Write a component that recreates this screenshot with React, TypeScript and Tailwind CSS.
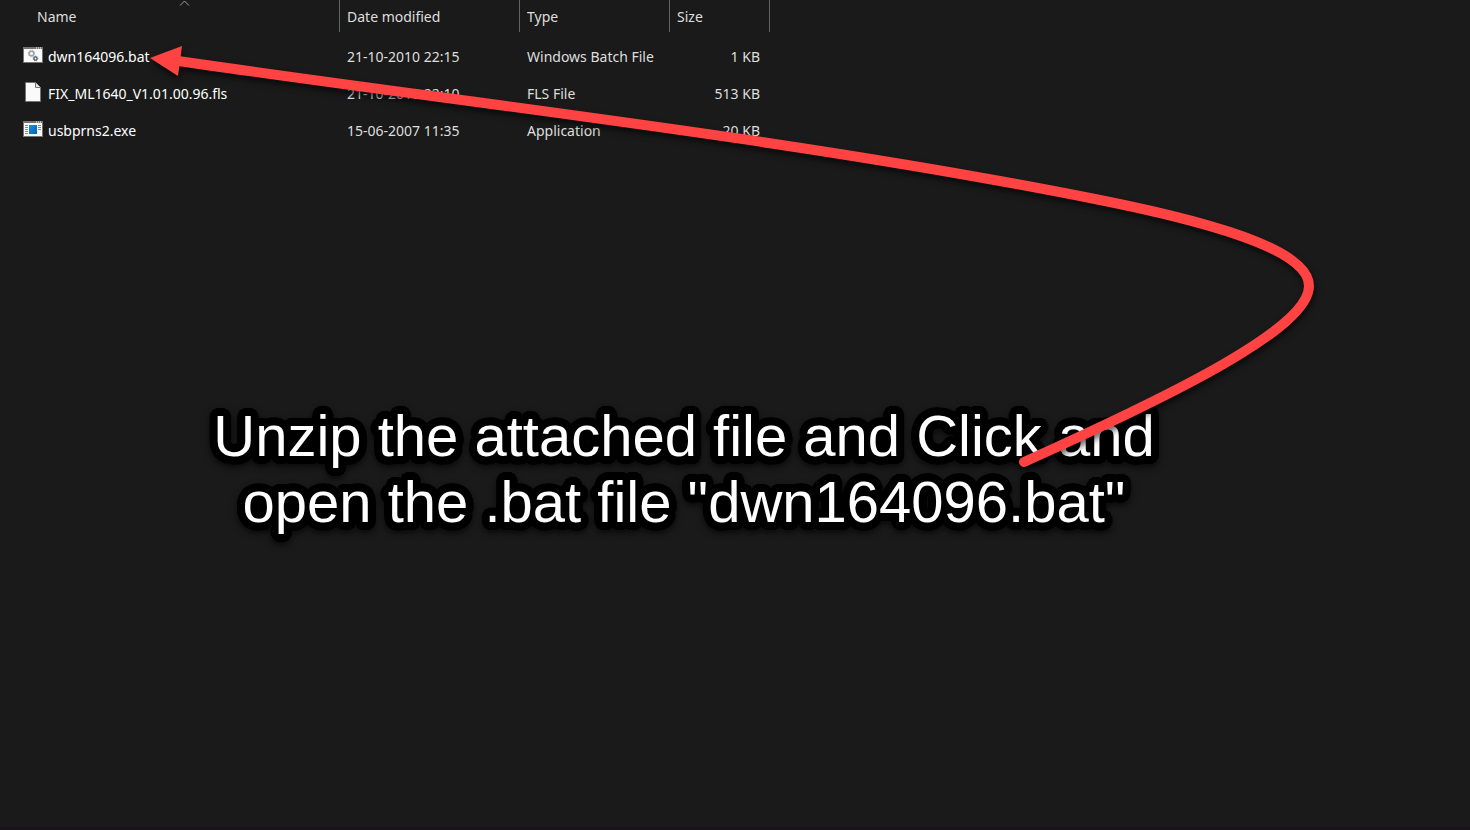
import type { ReactNode } from 'react';

interface FileEntry {
  name: string;
  modified: string;
  type: string;
  size: string;
  icon: ReactNode;
}

const batchIcon = (
  <svg className="mb-1 h-5 w-5" viewBox="0 0 20 20" fill="none">
    <rect x="0.5" y="2.5" width="19" height="15" fill="#fafafa" stroke="#77736f" />
    <path d="M0 3h20" stroke="#77736f" strokeWidth={2} />
    <path d="M13 3h1M15 3h1M17 3h1" stroke="#fff" />
    <circle cx="8.5" cy="8.5" r="2.3" stroke="#9aa5b1" strokeWidth={1.5} />
    <circle
      cx="8.5"
      cy="8.5"
      r="3.3"
      stroke="#9aa5b1"
      strokeWidth={1}
      strokeDasharray="1.3 1.3"
    />
    <circle cx="12.5" cy="13.5" r="1.6" stroke="#4b5560" strokeWidth={1.2} />
    <circle
      cx="12.5"
      cy="13.5"
      r="2.4"
      stroke="#4b5560"
      strokeWidth={0.8}
      strokeDasharray="0.9 1"
    />
  </svg>
);

const documentIcon = (
  <svg className="mb-1 h-5 w-5" viewBox="0 0 20 20" fill="none">
    <path d="M2.5 0.5h10l5 5v14h-15z" fill="#fafafa" stroke="#77736f" />
    <path d="M12.5 0.5v5h5" fill="#e4e4e4" stroke="#77736f" />
  </svg>
);

const applicationIcon = (
  <svg className="mb-1 h-5 w-5" viewBox="0 0 20 20" fill="none">
    <defs>
      <linearGradient id="app-blue" x1="0" y1="0" x2="1" y2="1">
        <stop offset="0" stopColor="#1c93dd" />
        <stop offset="1" stopColor="#0560b8" />
      </linearGradient>
    </defs>
    <rect x="0.5" y="2.5" width="19" height="15" fill="#fafafa" stroke="#77736f" />
    <path d="M0 3h20" stroke="#77736f" strokeWidth={2} />
    <path d="M13 3h1M15 3h1M17 3h1" stroke="#fff" />
    <path
      d="M2 6.5h3M2 8.5h3M2 10.5h3M2 12.5h3M2 14.5h3M15 6.5h3M15 8.5h3M15 10.5h3"
      stroke="#8a8a8a"
    />
    <rect x="6" y="6" width="8" height="9" fill="url(#app-blue)" />
  </svg>
);

const files: FileEntry[] = [
  {
    name: 'dwn164096.bat',
    modified: '21-10-2010 22:15',
    type: 'Windows Batch File',
    size: '1 KB',
    icon: batchIcon,
  },
  {
    name: 'FIX_ML1640_V1.01.00.96.fls',
    modified: '21-10-2010 22:10',
    type: 'FLS File',
    size: '513 KB',
    icon: documentIcon,
  },
  {
    name: 'usbprns2.exe',
    modified: '15-06-2007 11:35',
    type: 'Application',
    size: '20 KB',
    icon: applicationIcon,
  },
];

// Rounded black outline: copies of the text placed on circles around it
const ring = (radius: number, steps: number) =>
  Array.from({ length: steps }, (_, i) => {
    const angle = (i / steps) * Math.PI * 2;
    const x = (Math.cos(angle) * radius).toFixed(1);
    const y = (Math.sin(angle) * radius).toFixed(1);
    return `${x}px ${y}px 0 #000`;
  });

const outline = [...ring(8, 24), ...ring(4, 12)].join(', ');

function FileTable() {
  return (
    <table className="w-[770px] table-fixed border-separate border-spacing-0 text-left text-sm leading-5">
      <colgroup>
        <col className="w-[340px]" />
        <col className="w-[180px]" />
        <col className="w-[150px]" />
        <col className="w-[100px]" />
      </colgroup>
      <thead className="text-[#dedede]">
        <tr className="h-8">
          <th
            aria-sort="ascending"
            className="relative border-r border-[#636363] pt-0.5 pl-[37px] font-normal"
          >
            Name
            <svg
              className="absolute top-0 left-[179px] h-2 w-3"
              viewBox="0 0 12 8"
              fill="none"
              stroke="#a0a0a0"
            >
              <path d="M1 5.5l4.5-4.5 4.5 4.5" />
            </svg>
          </th>
          <th className="border-r border-[#636363] pt-0.5 pl-[7px] font-normal">
            Date modified
          </th>
          <th className="border-r border-[#636363] pt-0.5 pl-[7px] font-normal">
            Type
          </th>
          <th className="border-r border-[#636363] pt-0.5 pl-[7px] font-normal">
            Size
          </th>
        </tr>
      </thead>
      <tbody className="text-[#dedede]">
        <tr className="h-[6px]" aria-hidden="true">
          <td colSpan={4}></td>
        </tr>
        {files.map((file) => (
          <tr key={file.name} className="h-[37px]">
            <td className="pl-[23px] text-white">
              <div className="flex items-center gap-[5px]">
                {file.icon}
                <span>{file.name}</span>
              </div>
            </td>
            <td className="pl-[7px]">{file.modified}</td>
            <td className="pl-[7px]">{file.type}</td>
            <td className="pr-[10px] text-right">{file.size}</td>
          </tr>
        ))}
      </tbody>
    </table>
  );
}

function Arrow() {
  return (
    <svg
      className="pointer-events-none absolute top-0 left-0 h-[830px] w-[1470px] drop-shadow-[1px_4px_3px_rgba(0,0,0,0.6)]"
      viewBox="0 0 1470 830"
      fill="none"
    >
      <path
        d="M178 61C490 106 800 140 1100 200C1240 228 1309 255 1309 286C1309 328 1175 394 1024 462"
        stroke="#ff4343"
        strokeWidth={10}
        strokeLinecap="round"
      />
      <path d="M150 58l32-12-4 30z" fill="#ff4343" />
    </svg>
  );
}

export default function App() {
  return (
    <main className="relative min-h-screen overflow-hidden border-b-3 border-[#171318] bg-[#1a1a1a] font-['Noto_Sans','Open_Sans',sans-serif]">
      <FileTable />
      <div className="mt-[254px] ml-[184px] w-[1000px] drop-shadow-[0_3px_3px_rgba(0,0,0,0.6)]">
        <p
          className="text-center font-['Liberation_Sans',Arial,sans-serif] text-[58px] leading-[66px] text-white"
          style={{ textShadow: outline }}
        >
          Unzip the attached file and Click and
          <br />
          open the .bat file "dwn164096.bat"
        </p>
      </div>
      <Arrow />
    </main>
  );
}
